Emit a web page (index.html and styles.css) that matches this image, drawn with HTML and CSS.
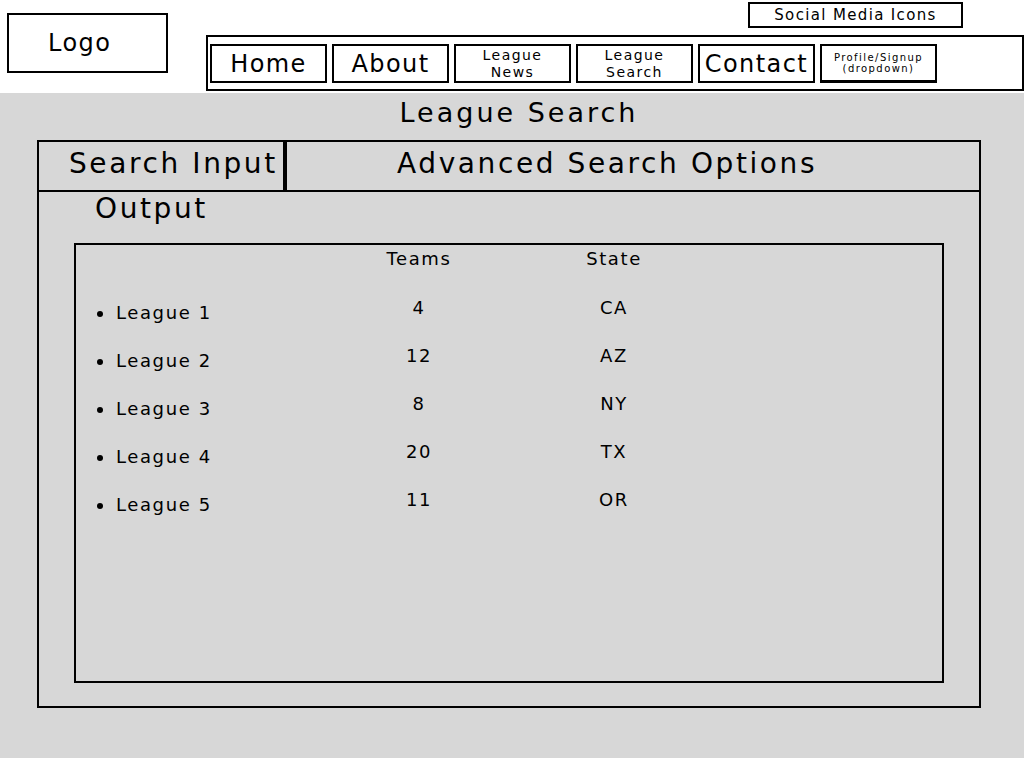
FILE: index.html
```html
<!DOCTYPE html>
<html lang="en">
<head>
<meta charset="utf-8">
<title>League Search</title>
<link rel="stylesheet" href="styles.css">
</head>
<body>
<header class="site-header">
  <div class="logo">Logo</div>
  <div class="header-right">
    <div class="social">Social Media Icons</div>
    <nav class="nav">
      <a class="nav-btn big" href="#">Home</a>
      <a class="nav-btn big" href="#">About</a>
      <a class="nav-btn small" href="#">League<br>News</a>
      <a class="nav-btn small" href="#">League<br>Search</a>
      <a class="nav-btn big" href="#">Contact</a>
      <a class="nav-btn tiny profile" href="#">Profile/Signup<br>(dropdown)</a>
    </nav>
  </div>
</header>
<main class="page">
  <h1 class="title">League Search</h1>
  <section class="search-box">
    <div class="search-head">
      <div class="search-input">Search Input</div>
      <div class="advanced">Advanced Search Options</div>
    </div>
    <h2 class="output-label">Output</h2>
    <div class="results">
      <ul class="col-league">
        <li>League 1</li>
        <li>League 2</li>
        <li>League 3</li>
        <li>League 4</li>
        <li>League 5</li>
      </ul>
      <div class="col col-teams">
        <div class="col-head">Teams</div>
        <div class="cell">4</div>
        <div class="cell">12</div>
        <div class="cell">8</div>
        <div class="cell">20</div>
        <div class="cell">11</div>
      </div>
      <div class="col col-state">
        <div class="col-head">State</div>
        <div class="cell">CA</div>
        <div class="cell">AZ</div>
        <div class="cell">NY</div>
        <div class="cell">TX</div>
        <div class="cell">OR</div>
      </div>
    </div>
  </section>
</main>
</body>
</html>
```

FILE: styles.css
```css
* {
  box-sizing: border-box;
}

html, body {
  margin: 0;
  padding: 0;
  background: #ffffff;
}

body {
  font-family: "DejaVu Sans", "Liberation Sans", sans-serif;
  color: #000;
  letter-spacing: 0.09em;
}

/* ---------- header ---------- */
.site-header {
  display: flex;
  height: 93px;
  background: #fff;
}

.logo {
  margin: 13px 0 0 7px;
  width: 161px;
  height: 60px;
  border: 2px solid #000;
  display: flex;
  align-items: center;
  padding-left: 39px;
  font-size: 24px;
}

.header-right {
  flex: 1;
  margin-left: 38px;
  padding-top: 2px;
  display: flex;
  flex-direction: column;
}

.social {
  align-self: flex-end;
  margin-right: 61px;
  width: 215px;
  height: 26px;
  border: 2px solid #000;
  display: flex;
  align-items: center;
  justify-content: center;
  font-size: 15px;
  letter-spacing: 1.35px;
}

.nav {
  margin-top: 7px;
  height: 56px;
  border: 2px solid #000;
  display: flex;
  align-items: flex-start;
  gap: 5px;
  padding: 7px 0 0 2px;
}

.nav-btn {
  width: 117px;
  height: 39px;
  border: 2px solid #000;
  display: flex;
  align-items: center;
  justify-content: center;
  text-align: center;
  color: #000;
  text-decoration: none;
}

.nav-btn.big {
  font-size: 24px;
}

.nav-btn.small {
  font-size: 14px;
  line-height: 17px;
}

.nav-btn.tiny {
  font-size: 10px;
  line-height: 11px;
}

.nav-btn.profile {
  border-bottom-width: 3px;
}

/* ---------- page ---------- */
.page {
  background: #d7d7d7;
  height: 665px;
  padding-top: 5px;
}

.title {
  margin: 0 0 12px 0;
  padding-left: 14px;
  text-align: center;
  font-size: 27px;
  font-weight: normal;
  line-height: 30px;
  letter-spacing: 3px;
}

.search-box {
  margin-left: 37px;
  width: 944px;
  height: 568px;
  border: 2px solid #000;
  display: flex;
  flex-direction: column;
}

.search-head {
  display: flex;
  height: 50px;
  border-bottom: 2px solid #000;
  font-size: 28px;
  letter-spacing: 2.6px;
  line-height: 43px;
}

.search-input {
  width: 248px;
  padding-left: 30px;
  border-right: 4px solid #000;
  white-space: nowrap;
}

.advanced {
  flex: 1;
  padding-left: 110px;
  white-space: nowrap;
}

.output-label {
  margin: 0 0 18px 0;
  padding-left: 56px;
  font-size: 28px;
  font-weight: normal;
  line-height: 33px;
  letter-spacing: 2.6px;
}

.results {
  margin: 0 35px;
  height: 440px;
  border: 2px solid #000;
  display: flex;
  font-size: 18px;
  letter-spacing: 1.6px;
}

.col-league {
  list-style: none;
  margin: 44px 0 0 0;
  padding: 0 0 0 21px;
  width: 303px;
}

.col-league li {
  line-height: 48px;
}

.col-league li::before {
  content: "";
  display: inline-block;
  width: 6px;
  height: 6px;
  border-radius: 50%;
  background: #000;
  margin-right: 13px;
  vertical-align: middle;
}

.col {
  width: 80px;
  padding-top: 2px;
  text-align: center;
}

.col-state {
  margin-left: 115px;
}

.col-head {
  line-height: 24px;
  margin-bottom: 13px;
}

.cell {
  line-height: 48px;
}
```
